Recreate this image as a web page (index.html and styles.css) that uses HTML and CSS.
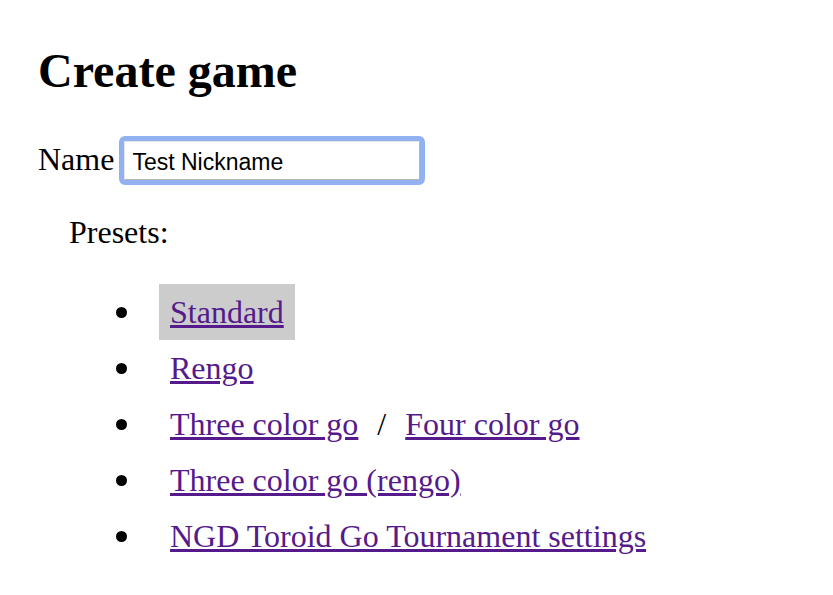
FILE: index.html
```html
<!DOCTYPE html>
<html lang="en">
<head>
<meta charset="utf-8">
<title>Create game</title>
<link rel="stylesheet" href="styles.css">
</head>
<body>
<main class="page">
  <h1 class="title">Create game</h1>
  <div class="name-row">
    <label class="name-label" for="nick">Name</label>
    <input class="name-input" id="nick" type="text" value="Test Nickname">
  </div>
  <div class="presets">
    <div class="presets-label">Presets:</div>
    <ul class="preset-list">
      <li><span class="item"><a class="preset preset-active" href="#standard">Standard</a></span></li>
      <li><span class="item"><a class="preset" href="#rengo">Rengo</a></span></li>
      <li><span class="item"><a class="preset" href="#three">Three color go</a> / <a class="preset" href="#four">Four color go</a></span></li>
      <li><span class="item"><a class="preset" href="#three-rengo">Three color go (rengo)</a></span></li>
      <li><span class="item"><a class="preset" href="#ngd">NGD Toroid Go Tournament settings</a></span></li>
    </ul>
  </div>
</main>
</body>
</html>
```
FILE: styles.css
```css
html, body {
  margin: 0;
  padding: 0;
  background: #ffffff;
}

body {
  font-family: "Liberation Serif", "Times New Roman", serif;
  font-size: 32px;
  line-height: 37px;
  color: #000000;
}

.page {
  padding-left: 38px;
}

.title {
  font-size: 48px;
  line-height: 55px;
  font-weight: bold;
  margin: 43px 0 43px 0;
}

.name-row {
  display: flex;
  align-items: flex-start;
}

.name-label {
  margin-right: 10px;
}

.name-input {
  box-sizing: border-box;
  width: 296px;
  height: 39px;
  padding: 4px 7px 0 7px;
  font-family: "Liberation Sans", Arial, sans-serif;
  font-size: 23px;
  color: #000000;
  background: #ffffff;
  border: 1px solid;
  border-color: #e6e6e6 #b4b4b4 #b4b4b4 #e6e6e6;
  border-radius: 1px;
  outline: 5px solid #92b1f1;
  outline-offset: 0;
}

.presets {
  padding-left: 31px;
  margin-top: 34px;
}

.presets-label {
  line-height: 37px;
}

.preset-list {
  margin: 33px 0 0 0;
  padding-left: 47px;
  list-style: none;
}

.preset-list li {
  display: flex;
  align-items: center;
  line-height: 38px;
}

.preset-list li::before {
  content: "";
  flex: none;
  width: 11px;
  height: 11px;
  border-radius: 50%;
  background: #000000;
  margin-right: 32px;
}

.preset {
  display: inline-block;
  padding: 9px 11px;
  color: #551a8b;
  text-decoration: underline;
}

.preset-active {
  background: #cccccc;
}
```
